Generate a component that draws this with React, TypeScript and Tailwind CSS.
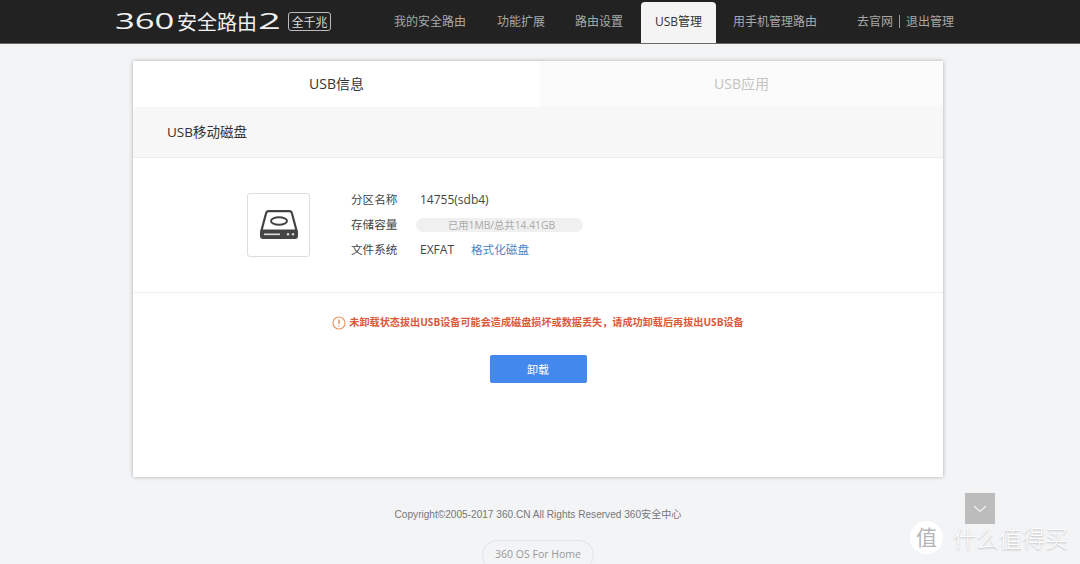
import React from "react";

const cjk = "font-['Open_Sans','Noto_Sans_CJK_SC',sans-serif]";

const Header = () => {
  return (
    <div className="h-[44px] bg-[#222222] border-b border-b-[#6a6a6a] flex items-end pl-[115px]">
      <div className="h-[43px] flex items-center w-[279px] shrink-0">
        <span className="text-[20px] leading-none text-[#f0f0f0] font-['Noto_Sans_CJK_SC',sans-serif] w-[168px] whitespace-nowrap flex items-center">
          <span className="inline-block w-[62px] scale-x-[1.65] origin-left text-[21px] font-['Open_Sans',sans-serif]">360</span>
          <span>安全路由</span>
          <span className="font-['Open_Sans',sans-serif] inline-block ml-[1px] scale-x-[1.9] origin-left text-[21px]">2</span>
        </span>
        <span className="ml-[5px] w-[43px] h-[19px] rounded-[3px] border border-[#bbbbbb] text-[12px] leading-[17px] text-center text-[#dddddd] font-['Noto_Sans_CJK_SC',sans-serif]">全千兆</span>
      </div>
      <div className={`flex h-[41px] text-[12px] text-[#a8a8a8] ${cjk}`}>
        <div className="leading-[40px] w-[103px] whitespace-nowrap">我的安全路由</div>
        <div className="leading-[40px] w-[78px] whitespace-nowrap">功能扩展</div>
        <div className="leading-[40px] w-[66px] whitespace-nowrap">路由设置</div>
        <div className="leading-[40px] w-[75px] bg-[#f4f4f4] rounded-t-[4px] text-center text-[#333333]">USB管理</div>
        <div className="leading-[40px] w-[141px] pl-[17px] whitespace-nowrap">用手机管理路由</div>
        <div className="leading-[40px] whitespace-nowrap flex items-start">
          <span>去官网</span>
          <span className="w-px h-[13px] bg-[#999999] mt-[13px] mx-[6px]"></span>
          <span>退出管理</span>
        </div>
      </div>
    </div>
  );
};

const DiskIcon = () => {
  return (
    <svg width="38" height="30" viewBox="0 0 38 30" fill="none">
      <path d="M9 1.2h20a3 3 0 0 1 3 2.3l4.5 17H1.5L6 3.5a3 3 0 0 1 3-2.3z" stroke="#444444" strokeWidth="2.2" />
      <ellipse cx="19" cy="11" rx="8" ry="3.8" stroke="#444444" strokeWidth="2" />
      <path d="M2 20h34a2 2 0 0 1 2 2v4a3 3 0 0 1-3 3H3a3 3 0 0 1-3-3v-4a2 2 0 0 1 2-2z" fill="#444444" />
      <rect x="4" y="23.5" width="16" height="1.6" fill="#dddddd" />
      <circle cx="28" cy="24.3" r="1.2" fill="#dddddd" />
      <circle cx="33" cy="24.3" r="1.2" fill="#dddddd" />
    </svg>
  );
};

const Card = () => {
  return (
    <div className={`w-[810px] h-[416px] mt-[17px] bg-white shadow-[0_0_4px_rgba(0,0,0,0.3)] ${cjk}`}>
      <div className="flex h-[46px] text-[14px] text-center leading-[46px]">
        <div className="w-[407px] text-[#333333]">USB信息</div>
        <div className="flex-1 bg-[#fbfbfb] text-[#c4c4c4]">USB应用</div>
      </div>
      <div className="h-[51px] bg-[#f7f7f7] border-b border-b-[#eeeeee] pl-[34px] text-[13.5px] leading-[50px] text-[#333333]">USB移动磁盘</div>
      <div className="h-[135px] border-b border-b-[#eeeeee] flex pl-[114px] pt-[35px]">
        <div className="w-[63px] h-[64px] border border-[#dddddd] rounded-[3px] flex items-center justify-center shrink-0">
          <DiskIcon />
        </div>
        <div className="ml-[41px] -mt-[6px] text-[11.6px] text-[#444444]">
          <div className="flex items-center h-[25px]">
            <span className="w-[69px]">分区名称</span>
            <span className="text-[12px]">14755(sdb4)</span>
          </div>
          <div className="flex items-center h-[25px] pt-[1px]">
            <span className="w-[65px]">存储容量</span>
            <span className="w-[167px] h-[14px] rounded-full bg-[#f0f0f0] text-center pl-[4px] text-[10.3px] leading-[14px] text-[#aaaaaa]">已用1MB/总共14.41GB</span>
          </div>
          <div className="flex items-center h-[25px]">
            <span className="w-[69px]">文件系统</span>
            <span className="text-[12px] w-[51px]">EXFAT</span>
            <span className="text-[#4a86c5]">格式化磁盘</span>
          </div>
        </div>
      </div>
      <div className="flex flex-col items-center">
        <div className="flex items-center mt-[22px] h-[16px] text-[10.15px] font-bold text-[#dc5a3c]">
          <svg width="14" height="14" viewBox="0 0 14 14" fill="none" className="mr-[3px]">
            <circle cx="7" cy="7" r="6" stroke="#ea9a68" strokeWidth="1.2" />
            <path d="M7 3.6v4.4M7 9.4v1.2" stroke="#e08a50" strokeWidth="1.3" />
          </svg>
          <span className="whitespace-nowrap">未卸载状态拔出USB设备可能会造成磁盘损坏或数据丢失，请成功卸载后再拔出USB设备</span>
        </div>
        <div className="w-[97px] h-[28px] mt-[24px] bg-[#4388ec] rounded-[2px] text-white text-[11px] leading-[29px] text-center">卸载</div>
      </div>
    </div>
  );
};

export default function App() {
  return (
    <div className="relative w-[1080px] h-[564px] overflow-hidden bg-[#f3f4f6]">
      <Header />
      <div className="w-[810px] ml-[133px]">
        <Card />
        <div className="mt-[32px] text-center text-[10.1px] leading-[12px] text-[#777777] font-['Liberation_Sans','Noto_Sans_CJK_SC',sans-serif] whitespace-nowrap">
          Copyright©2005-2017 360.CN All Rights Reserved 360安全中心
        </div>
        <div className="w-[112px] h-[30px] mx-auto mt-[19px] rounded-full border border-[#e2e2e2] text-center text-[10.5px] leading-[26px] text-[#999999] font-['Open_Sans',sans-serif]">
          360 OS For Home
        </div>
      </div>
      <div className="absolute left-[965px] top-[493px] w-[30px] h-[31px] bg-[#bcbcbc] flex items-center justify-center">
        <svg width="14" height="8" viewBox="0 0 14 8" fill="none">
          <path d="M1 1l6 5.5L13 1" stroke="#f0f0f0" strokeWidth="1.2" />
        </svg>
      </div>
      <div className="absolute left-[910px] top-[521px] flex items-center font-['Noto_Sans_CJK_SC',sans-serif]">
        <div className="w-[33px] h-[33px] rounded-full bg-white text-[#b5b5b5] text-[21px] leading-[31px] text-center">值</div>
        <div className="ml-[10px] text-[23px] leading-[33px] text-white font-light [text-shadow:0_1px_2px_rgba(0,0,0,0.25)] whitespace-nowrap">什么值得买</div>
      </div>
    </div>
  );
}
